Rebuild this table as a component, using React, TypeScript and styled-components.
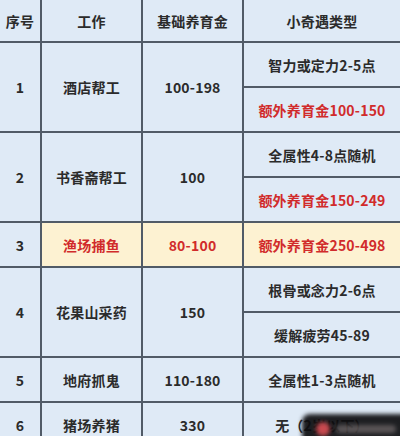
import React from "react";
import styled, { createGlobalStyle } from "styled-components";

const Global = createGlobalStyle`
  html, body { margin: 0; padding: 0; width: 400px; height: 436px; overflow: hidden; background: #dfeaf6; }
  #root { width: 400px; height: 436px; overflow: hidden; position: relative; }
`;

const Table = styled.div`
  display: grid;
  grid-template-columns: 40px 99px 99px 1fr;
  grid-template-rows: 41px repeat(9, 43px);
  gap: 2px;
  background: #515b67;
  width: 400px;
  font-family: "Noto Sans CJK SC", "Noto Sans", sans-serif;
`;

const Cell = styled.div<{ $span?: number; $hl?: boolean; $red?: boolean; $col?: number }>`
  grid-row: span ${(p) => p.$span ?? 1};
  ${(p) => (p.$col ? `grid-column: ${p.$col};` : "")}
  display: flex;
  align-items: center;
  justify-content: center;
  background: ${(p) => (p.$hl ? "#fdf2d2" : "#dfeaf6")};
  color: ${(p) => (p.$red ? "#d12b2b" : "#2b2b2b")};
  font-size: 14px;
  font-weight: 700;
  white-space: nowrap;
  letter-spacing: 0.2px;
`;

const Watermark = styled.div`
  position: absolute;
  left: 302px;
  top: 414px;
  width: 110px;
  height: 30px;
  border-radius: 8px;
  background: rgba(12, 12, 14, 0.92);
  filter: blur(2px);
  display: flex;
  align-items: center;
  padding-left: 14px;
  gap: 6px;
`;

const Logo = styled.div`
  width: 14px;
  height: 14px;
  border-radius: 50%;
  background: #c8494f;
`;

const Blur = styled.div`
  width: 60px;
  height: 8px;
  border-radius: 4px;
  background: rgba(150, 140, 140, 0.5);
`;

type Row = {
  no: string;
  job: string;
  base: string;
  events: string[];
  hl?: boolean;
};

const rows: Row[] = [
  { no: "1", job: "酒店帮工", base: "100-198", events: ["智力或定力2-5点", "额外养育金100-150"] },
  { no: "2", job: "书香斋帮工", base: "100", events: ["全属性4-8点随机", "额外养育金150-249"] },
  { no: "3", job: "渔场捕鱼", base: "80-100", events: ["额外养育金250-498"], hl: true },
  { no: "4", job: "花果山采药", base: "150", events: ["根骨或念力2-6点", "缓解疲劳45-89"] },
  { no: "5", job: "地府抓鬼", base: "110-180", events: ["全属性1-3点随机"] },
  { no: "6", job: "猪场养猪", base: "330", events: ["无（2岁以下）"] },
];

export default function App() {
  return (
    <>
      <Global />
      <Table>
        <Cell>序号</Cell>
        <Cell>工作</Cell>
        <Cell>基础养育金</Cell>
        <Cell>小奇遇类型</Cell>
        {rows.map((r) => {
          const span = r.events.length;
          return (
            <React.Fragment key={r.no}>
              <Cell $span={span} $col={1}>{r.no}</Cell>
              <Cell $span={span} $hl={r.hl} $red={r.hl}>{r.job}</Cell>
              <Cell $span={span} $hl={r.hl} $red={r.hl}>{r.base}</Cell>
              {r.events.map((e) => (
                <Cell key={e} $hl={r.hl} $red={e.startsWith("额外")}>
                  {e}
                </Cell>
              ))}
            </React.Fragment>
          );
        })}
      </Table>
      <Watermark>
        <Logo />
        <Blur />
      </Watermark>
    </>
  );
}
